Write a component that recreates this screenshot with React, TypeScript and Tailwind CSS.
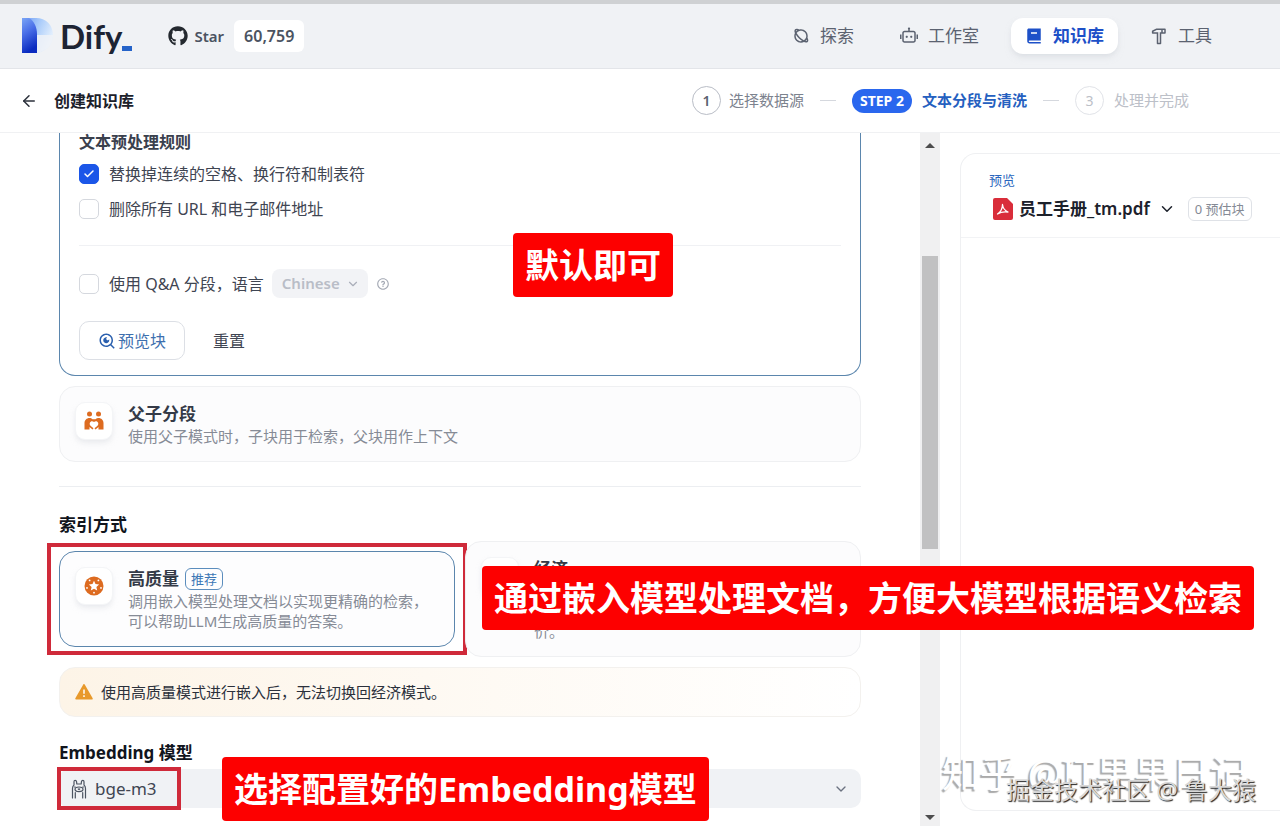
import type { ReactNode } from 'react'
import { ArrowLeft, Check, ChevronDown } from 'lucide-react'
import type { IconType } from 'react-icons'
import { FaGithub } from 'react-icons/fa'
import {
  RiAlertFill,
  RiBook2Fill,
  RiHammerLine,
  RiPlanetLine,
  RiQuestionLine,
  RiRobot2Line,
  RiSearchEyeLine,
} from 'react-icons/ri'

const navItems: { label: string; icon: IconType; active?: boolean }[] = [
  { label: '探索', icon: RiPlanetLine },
  { label: '工作室', icon: RiRobot2Line },
  { label: '知识库', icon: RiBook2Fill, active: true },
  { label: '工具', icon: RiHammerLine },
]

function DifyLogo() {
  return (
    <a href="#" aria-label="Dify" className="flex items-center">
      <svg width="32" height="36" viewBox="0 0 32 36" aria-hidden="true">
        <defs>
          <linearGradient id="stem" x1="0" y1="0" x2="0.3" y2="1">
            <stop offset="0" stopColor="#7ba6f6" />
            <stop offset="0.45" stopColor="#4a6fe8" />
            <stop offset="1" stopColor="#0a2bc0" />
          </linearGradient>
          <linearGradient id="bowl" x1="0" y1="0" x2="1" y2="0.5">
            <stop offset="0" stopColor="#6b99f5" />
            <stop offset="0.5" stopColor="#a9cbfa" />
            <stop offset="1" stopColor="#e6f1fd" />
          </linearGradient>
        </defs>
        <path d="M0 0h14c10 0 17 7 17 17 0 9-6 16-16 18V17z" fill="url(#bowl)" />
        <path d="M15 17h16c0 9-6 16-16 18z" fill="#f0f2f7" fillOpacity="0.85" />
        <path d="M0 0h7c5 3 8 9 8 16v19H0z" fill="url(#stem)" />
      </svg>
      <span className="ml-1.5 font-['Lato'] text-[33px] leading-9 font-bold text-[#1d2433]">Dify</span>
      <span className="mt-6 h-[5px] w-2.5 bg-[#2563c9]" />
    </a>
  )
}

function TopBar() {
  return (
    <header className="flex h-[69px] items-center justify-between border-t-4 border-b border-t-[#cfd1d3] border-b-[#e3e5e9] bg-[#f0f2f5] pr-[54px] pl-[22px]">
      <div className="flex items-center">
        <DifyLogo />
        <a href="#" className="ml-9 flex items-center text-[15px] font-semibold text-[#4b5361]">
          <FaGithub className="size-5 text-[#24292f]" />
          <span className="ml-1.5">Star</span>
          <span className="ml-2.5 rounded-md bg-white px-2.5 text-base leading-8">60,759</span>
        </a>
      </div>
      <nav className="flex gap-[18px]">
        {navItems.map(({ label, icon: Icon, active }) => (
          <a
            key={label}
            href="#"
            className={
              active
                ? 'flex h-9 items-center gap-2.5 rounded-xl bg-white px-3.5 text-[17px] font-bold text-[#1d50c8] shadow-md shadow-gray-300/50'
                : 'flex h-9 items-center gap-2.5 rounded-xl px-3.5 text-[17px] text-[#5b6270]'
            }
          >
            <Icon className="size-[18px]" />
            {label}
          </a>
        ))}
      </nav>
    </header>
  )
}

function Steps() {
  return (
    <div className="flex h-16 items-center justify-between border-b border-[#f0f1f3] pr-[91px] pl-5">
      <div className="flex items-center gap-4">
        <button type="button" aria-label="返回">
          <ArrowLeft className="size-[18px] text-[#2b303b]" />
        </button>
        <h1 className="text-base font-semibold text-[#1c212b]">创建知识库</h1>
      </div>
      <ol className="flex items-center gap-4 text-[15px]">
        <li className="flex items-center gap-2 text-[#7c828e]">
          <span className="flex size-[29px] items-center justify-center rounded-full border border-[#b9bdc6] text-sm font-semibold text-[#5b6270]">
            1
          </span>
          选择数据源
        </li>
        <li aria-hidden="true" className="h-px w-4 bg-[#d5d8de]" />
        <li className="flex items-center gap-2.5 font-semibold text-[#2560c0]">
          <span className="rounded-full bg-[#2a67ee] px-2 text-sm leading-6 font-bold text-white">STEP 2</span>
          文本分段与清洗
        </li>
        <li aria-hidden="true" className="h-px w-4 bg-[#d5d8de]" />
        <li className="flex items-center gap-2.5 text-[#bcc0c8]">
          <span className="flex size-[29px] items-center justify-center rounded-full border border-[#e1e3e8] text-sm">
            3
          </span>
          处理并完成
        </li>
      </ol>
    </div>
  )
}

function CheckboxRow({ label, defaultChecked }: { label: string; defaultChecked?: boolean }) {
  return (
    <label className="flex h-5 items-center gap-2.5 text-base text-[#3f4552]">
      <span className="relative flex size-5">
        <input
          type="checkbox"
          defaultChecked={defaultChecked}
          className="peer size-5 appearance-none rounded-[5px] border border-[#d5d8de] bg-white checked:border-[#1b56e8] checked:bg-[#1b56e8]"
        />
        <Check className="absolute top-1 left-1 hidden size-3 text-white peer-checked:block" strokeWidth={3} />
      </span>
      {label}
    </label>
  )
}

function Callout({ className, children }: { className: string; children: ReactNode }) {
  return (
    <div
      className={`absolute z-10 rounded bg-[#fd0000] px-3 text-[34px] leading-[64px] font-bold whitespace-nowrap text-white ${className}`}
    >
      {children}
    </div>
  )
}

function RulesCard() {
  return (
    <section className="relative rounded-b-2xl border border-t-0 border-[#5b86ad] px-[19px] pb-[15px]">
      <h2 className="text-base leading-[18px] font-semibold text-[#3a404d]">文本预处理规则</h2>
      <div className="mt-[13px] flex flex-col gap-[15px]">
        <CheckboxRow label="替换掉连续的空格、换行符和制表符" defaultChecked />
        <CheckboxRow label="删除所有 URL 和电子邮件地址" />
      </div>
      <hr className="mt-[26px] border-[#f0f1f4]" />
      <div className="mt-[23px] flex items-center">
        <CheckboxRow label="使用 Q&A 分段，语言" />
        <div className="relative ml-2">
          <select
            disabled
            aria-label="语言"
            className="h-[29px] w-24 appearance-none rounded-lg bg-[#f2f3f6] pl-2.5 text-[15px] font-semibold text-[#b9bdc7] opacity-100"
          >
            <option>Chinese</option>
          </select>
          <ChevronDown className="pointer-events-none absolute top-2 right-2 size-3.5 text-[#a9aeb9]" />
        </div>
        <RiQuestionLine className="ml-2 size-3.5 text-[#a4a9b4]" />
      </div>
      <div className="mt-[23px] flex items-center gap-7">
        <button
          type="button"
          className="flex h-[39px] items-center gap-0.5 rounded-[10px] border border-[#dcdfe5] px-[18px] text-base text-[#3d6fae]"
        >
          <RiSearchEyeLine className="size-[18px] text-[#2a5fae]" />
          预览块
        </button>
        <button type="button" className="text-base text-[#3f4552]">
          重置
        </button>
      </div>
      <Callout className="top-[100px] left-[453px]">默认即可</Callout>
    </section>
  )
}

function ParentChildIcon() {
  return (
    <svg viewBox="0 0 20 20" className="size-5" fill="#dd6b20" aria-hidden="true">
      <circle cx="5.500" cy="3" r="2.500" />
      <circle cx="14.500" cy="3" r="2.500" />
      <path d="M5.500 7C2.700 7 .5 9.300.5 12v6.500h5V16l3 2.500 1-1.200-3-2.600c-1.200-1.200-1-3 .2-3.900.9-.7 2.200-.6 3.300.3 1.100-.9 2.400-1 3.300-.3 1.200.9 1.400 2.700.2 3.900l-3 2.600 1 1.200 3-2.500v2.500h5V12c0-2.700-2.200-5-5-5-1.200 0-2.200.5-3 1.200H8.500C7.700 7.500 6.700 7 5.500 7z" />
    </svg>
  )
}

function QualityIcon() {
  return (
    <svg viewBox="0 0 20 20" className="size-5" aria-hidden="true">
      <circle cx="10" cy="10" r="9.500" fill="#dd6b20" />
      <path d="M10 4.800l1.500 3.300 3.600.4-2.700 2.400.8 3.600L10 12.700l-3.200 1.800.8-3.600-2.700-2.400 3.600-.4z" fill="#fff" />
      <g fill="#fff">
        <circle cx="5.600" cy="4.400" r=".9" />
        <circle cx="14.400" cy="4.400" r=".9" />
        <circle cx="3" cy="11.900" r=".9" />
        <circle cx="17" cy="11.900" r=".9" />
        <circle cx="10" cy="16.700" r=".9" />
      </g>
    </svg>
  )
}

type OptionCardProps = {
  icon?: ReactNode
  title: string
  badge?: string
  selected?: boolean
  children: ReactNode
}

function OptionCard({ icon, title, badge, selected, children }: OptionCardProps) {
  return (
    <div
      className={
        selected
          ? 'flex gap-[15px] rounded-2xl border border-[#5b86ad] bg-[#fdfdfe] p-[15px]'
          : 'flex gap-[15px] rounded-2xl border border-[#eff0f2] bg-[#fcfcfd] p-[15px]'
      }
    >
      <div className="flex size-[38px] shrink-0 items-center justify-center rounded-[10px] border border-[#f4f5f7] bg-white shadow-md shadow-gray-200/70">
        {icon}
      </div>
      <div>
        <h3 className="flex h-6 items-center gap-1.5 text-[17px] font-semibold text-[#343a47]">
          {title}
          {badge && (
            <span className="rounded-md border border-[#5b8dbd] px-[5px] text-[13px] leading-5 font-normal text-[#3b76b5]">
              {badge}
            </span>
          )}
        </h3>
        <p className="text-[15px] leading-5 text-[#868b96]">{children}</p>
      </div>
    </div>
  )
}

// Small llama mark of the model provider
function OllamaIcon() {
  return (
    <svg
      viewBox="0 0 16 20"
      className="pointer-events-none absolute top-2.5 left-3 h-5 w-4"
      fill="none"
      stroke="#4b5361"
      strokeWidth="1.200"
      strokeLinecap="round"
      strokeLinejoin="round"
      aria-hidden="true"
    >
      <path d="M1.500 19V9.500C1.500 7.800 2 6.800 3 6V2.800C3 .8 5.300.8 5.600 2.800L5.800 5h4.400l.2-2.200c.3-2 2.600-2 2.600 0V6c1 .8 1.500 1.800 1.500 3.500V19" />
      <ellipse cx="8" cy="10.300" rx="4" ry="2.300" />
      <path d="M7.300 10l.7.600.7-.6M3.500 8h.8M11.700 8h.8M4.300 13.500V19M11.700 13.500V19" />
    </svg>
  )
}

function Settings() {
  return (
    <main className="min-w-0 px-[59px] pb-[15px]">
      <RulesCard />
      <div className="mt-2.5">
        <OptionCard icon={<ParentChildIcon />} title="父子分段">
          使用父子模式时，子块用于检索，父块用作上下文
        </OptionCard>
      </div>
      <hr className="mt-6 border-[#eceef1]" />

      <h2 className="mt-[26px] text-[17px] leading-6 font-bold text-[#11151d]">索引方式</h2>
      <div className="mt-1 grid grid-cols-2 items-center gap-2.5">
        <div className="relative">
          <OptionCard icon={<QualityIcon />} title="高质量" badge="推荐" selected>
            调用嵌入模型处理文档以实现更精确的检索，可以帮助LLM生成高质量的答案。
          </OptionCard>
          <div className="absolute -inset-x-3 -inset-y-2 border-4 border-[#cf2a3a]" />
        </div>
        <div className="relative">
          <OptionCard title="经济">
            每个数据块使用 10 个关键词进行检索，不会消耗任何 tokens，但会以降低检索准确性为代价。
          </OptionCard>
          <Callout className="top-[25px] left-[17px]">通过嵌入模型处理文档，方便大模型根据语义检索</Callout>
        </div>
      </div>
      <p className="mt-2.5 flex h-[50px] items-center gap-[7px] rounded-2xl border border-[#f3f1ee] bg-linear-to-r from-[#fdf4e7] to-white px-3.5 text-[15px] text-[#2b303b]">
        <RiAlertFill className="size-5 text-[#e8992b]" />
        使用高质量模式进行嵌入后，无法切换回经济模式。
      </p>

      <label htmlFor="embedding" className="mt-6 block text-[17px] leading-6 font-bold text-[#11151d]">
        Embedding 模型
      </label>
      <div className="relative mt-1">
        <select
          id="embedding"
          className="h-[39px] w-full appearance-none rounded-[10px] bg-[#f0f2f5] pl-9 text-[17px] text-[#3f4552]"
        >
          <option>bge-m3</option>
        </select>
        <OllamaIcon />
        <ChevronDown className="pointer-events-none absolute top-3 right-3 size-4 text-[#6b7280]" />
        <div className="absolute -top-0.5 -left-0.5 h-[43px] w-[124px] border-4 border-[#cf2a3a]" />
        <Callout className="-top-3 left-[163px]">选择配置好的Embedding模型</Callout>
      </div>
    </main>
  )
}

function ScrollTrack() {
  return (
    <div aria-hidden="true" className="flex flex-col items-center bg-[#f0f0f1]">
      <svg viewBox="0 0 10 6" className="mt-[9px] h-1.5 w-2.5" fill="#4d4d4d">
        <path d="M0 6l5-5 5 5z" />
      </svg>
      <div className="flex-[107]" />
      <div className="w-4 flex-[292] bg-[#c1c1c2]" />
      <div className="flex-[264]" />
      <svg viewBox="0 0 10 6" className="mb-[5px] h-1.5 w-2.5" fill="#4d4d4d">
        <path d="M0 0l5 5 5-5z" />
      </svg>
    </div>
  )
}

function Preview() {
  return (
    <aside className="flex min-w-0 flex-col pt-5 pb-[15px] pl-5">
      <div className="flex-1 rounded-l-2xl border border-r-0 border-[#eff0f2]">
        <div className="border-b border-[#f2f3f5] pt-4 pb-[13px] pl-7">
          <h2 className="text-[13px] leading-5 text-[#2a66bd]">预览</h2>
          <div className="mt-1 flex h-[30px] items-center">
            <svg viewBox="0 0 20 22" className="mr-1.5 ml-1 h-[22px] w-5" aria-hidden="true">
              <path d="M2 0h12l6 6v14a2 2 0 0 1-2 2H2a2 2 0 0 1-2-2V2a2 2 0 0 1 2-2z" fill="#d92d3a" />
              <path
                d="M9.500 6.500c.3 3 2.200 6 5.500 7.500-4-.6-7.500 0-10.500 2 3-2 5-5.800 5-9.500z"
                fill="none"
                stroke="#fff"
                strokeWidth="1.300"
                strokeLinejoin="round"
              />
            </svg>
            <button type="button" className="flex items-center gap-2 text-[17px] font-semibold text-[#1c212b]">
              员工手册_tm.pdf
              <ChevronDown className="size-[18px]" />
            </button>
            <span className="ml-3 rounded-md border border-[#dfe2e7] px-1.5 text-[13px] leading-[22px] whitespace-nowrap text-[#858a95]">
              0 预估块
            </span>
          </div>
        </div>
      </div>
    </aside>
  )
}

export default function App() {
  return (
    <div className="relative flex min-h-screen flex-col overflow-hidden bg-white font-['Noto_Sans','Noto_Sans_CJK_SC',sans-serif]">
      <TopBar />
      <Steps />
      <div className="grid flex-1 grid-cols-[46fr_1fr_17fr]">
        <Settings />
        <ScrollTrack />
        <Preview />
      </div>
      <p className="absolute right-8 bottom-8 text-[38px] leading-[44px] whitespace-nowrap text-white text-shadow-[-2px_2px_1px_#aaa]">
        知乎 @IT果果日记
      </p>
      <p className="absolute right-6 bottom-5 text-2xl whitespace-nowrap text-[#d8d8d8] text-shadow-[1px_1px_1px_#222]">
        掘金技术社区 @ 鲁大猿
      </p>
    </div>
  )
}
